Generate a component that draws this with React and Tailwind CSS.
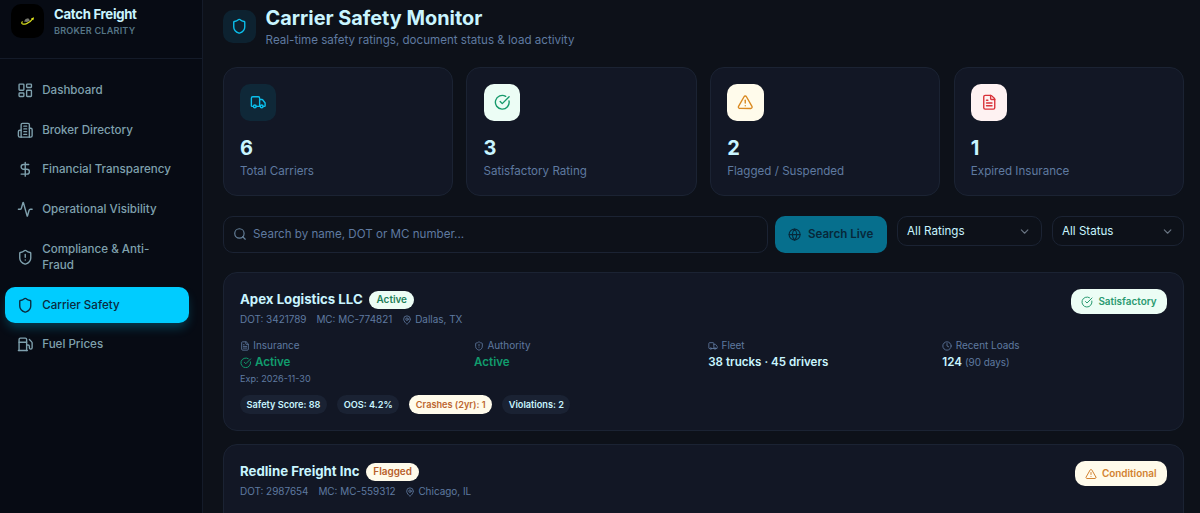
import { useState } from 'react';
import {
  LayoutDashboard, DollarSign, Activity, ShieldAlert, Shield, Fuel, Truck,
  CircleCheckBig, TriangleAlert, FileText, Search, Globe, ChevronDown, MapPin, Clock
} from 'lucide-react';

const BuildingIcon = ({ className }) => (
  <svg className={className} viewBox="0 0 24 24" fill="none" stroke="currentColor" strokeWidth={2} strokeLinecap="round" strokeLinejoin="round">
    <path d="M6 22V4a2 2 0 0 1 2-2h8a2 2 0 0 1 2 2v18Z" />
    <path d="M6 12H4a2 2 0 0 0-2 2v6a2 2 0 0 0 2 2h2" />
    <path d="M18 9h2a2 2 0 0 1 2 2v9a2 2 0 0 1-2 2h-2" />
    <path d="M10 6h4M10 10h4M10 14h4M10 18h4" />
  </svg>
);

const navItems = [
  { label: 'Dashboard', icon: LayoutDashboard },
  { label: 'Broker Directory', icon: BuildingIcon },
  { label: 'Financial Transparency', icon: DollarSign },
  { label: 'Operational Visibility', icon: Activity },
  { label: 'Compliance & Anti-Fraud', icon: ShieldAlert },
  { label: 'Carrier Safety', icon: Shield },
  { label: 'Fuel Prices', icon: Fuel }
];

const stats = [
  { label: 'Total Carriers', value: 6, icon: Truck, color: 'bg-[#0f2838] text-[#0bbfec]' },
  { label: 'Satisfactory Rating', value: 3, icon: CircleCheckBig, color: 'bg-[#ecfdf5] text-[#169a6b]' },
  { label: 'Flagged / Suspended', value: 2, icon: TriangleAlert, color: 'bg-[#fffbeb] text-[#d9881f]' },
  { label: 'Expired Insurance', value: 1, icon: FileText, color: 'bg-[#fef2f2] text-[#d93038]' }
];

const carriers = [
  {
    name: 'Apex Logistics LLC',
    status: 'Active',
    statusColor: 'bg-[#ecfdf5] text-[#1f8059]',
    dot: '3421789',
    mc: 'MC-774821',
    city: 'Dallas, TX',
    rating: 'Satisfactory',
    ratingIcon: CircleCheckBig,
    ratingColor: 'bg-[#ecfdf5] text-[#2a9a70]',
    exp: '2026-11-30',
    trucks: 38,
    drivers: 45,
    loads: 124,
    score: 88,
    oos: '4.2%',
    crashes: 1,
    violations: 2
  },
  {
    name: 'Redline Freight Inc',
    status: 'Flagged',
    statusColor: 'bg-[#fffbeb] text-[#b8602a]',
    dot: '2987654',
    mc: 'MC-559312',
    city: 'Chicago, IL',
    rating: 'Conditional',
    ratingIcon: TriangleAlert,
    ratingColor: 'bg-[#fffbeb] text-[#d28230]',
    exp: '2026-03-15',
    trucks: 22,
    drivers: 27,
    loads: 61,
    score: 64,
    oos: '11.8%',
    crashes: 3,
    violations: 7
  }
];

const Sidebar = ({ active, onSelect }) => (
  <aside className="w-[203px] shrink-0 bg-[#070b14] border-r border-[#141b29]">
    <div className="h-[59px] border-b border-[#141b29] flex items-start gap-[10px] pl-[11px] pt-[4px]">
      <div className="w-[33px] h-[34px] rounded-[10px] bg-black flex items-center justify-center">
        <svg className="w-[15px] h-[10px]" viewBox="0 0 15 10" fill="none">
          <path d="M4 5.4 5.6 3 8.2 2.2 10 4.6 7 6Z" fill="#77786f" />
          <path d="M2.2 5.8C.6 8 3.4 8.8 6.6 7.6 9.4 6.5 11.4 4.8 12.8 2.6" stroke="#d5dc1c" strokeWidth="1.2" strokeLinecap="round" />
          <path d="M11 2.4 14 1.3 13.3 4.2Z" fill="#e3e51e" />
        </svg>
      </div>
      <div>
        <div className="pt-[0.3px] text-[13.2px] leading-[20px] font-bold tracking-[-0.3px] text-[#c9f5ff]">Catch Freight</div>
        <div className="text-[9.1px] leading-[13px] font-semibold tracking-[0.2px] text-[#557586]">BROKER CLARITY</div>
      </div>
    </div>
    <nav className="pt-[13px] pl-[5px] pr-[13px] flex flex-col gap-[3.3px]">
      {navItems.map(({ label, icon: Icon }) => (
        <button
          key={label}
          onClick={() => onSelect(label)}
          className={`flex items-center gap-[8.5px] pl-[12.2px] pr-[12px] pt-[10.1px] pb-[9.7px] rounded-[10px] text-left text-[11.6px] leading-[16.55px] font-medium ${
            active === label
              ? 'bg-[#00ccff] text-[#0b2a3e] shadow-[0_6px_11px_-2px_rgba(0,204,255,0.28)]'
              : 'text-[#7fa1ae]'
          }`}
        >
          <Icon className="w-[16.5px] h-[16.5px] shrink-0" />
          <span>{label}</span>
        </button>
      ))}
    </nav>
  </aside>
);

const StatCard = ({ label, value, icon: Icon, color }) => (
  <div className="h-[129px] rounded-[14px] border border-[#1b2333] bg-[#121725] p-[16.3px]">
    <div className={`w-[36.5px] h-[36.5px] rounded-[10px] flex items-center justify-center ${color}`}>
      <Icon className="w-[16.5px] h-[16.5px]" />
    </div>
    <div className="mt-[14.5px] text-[20px] leading-[26.5px] font-bold text-[#c9f5ff]">{value}</div>
    <div className="mt-[1.4px] text-[11.6px] leading-[16.5px] text-[#5f7aa0]">{label}</div>
  </div>
);

const FieldLabel = ({ icon: Icon, children }) => (
  <div className="flex items-center gap-[3.3px] text-[9.93px] leading-[13.2px] text-[#5f7aa0]">
    <Icon className="w-[10px] h-[10px]" />
    {children}
  </div>
);

const chip = 'h-[19px] flex items-center rounded-full px-[6.6px] text-[9.18px] font-semibold';

const CarrierCard = ({ carrier }) => {
  const RatingIcon = carrier.ratingIcon;

  return (
    <div className="h-[159px] shrink-0 rounded-[14px] border border-[#1b2333] bg-[#121725] px-[16.4px] pt-[16px]">
      <div className="flex justify-between items-start">
        <div className="pt-[0.5px]">
          <div className="flex items-center gap-[6.6px] h-[20px]">
            <h3 className="text-[13.24px] font-bold text-[#c9f5ff]">{carrier.name}</h3>
            <span className={`h-[18px] flex items-center rounded-full px-[7.2px] text-[9.93px] font-semibold ${carrier.statusColor}`}>
              {carrier.status}
            </span>
          </div>
          <div className="mt-[3.5px] flex items-center gap-[9.9px] text-[9.93px] leading-[13.2px] text-[#5f7aa0]">
            <span>DOT: {carrier.dot}</span>
            <span>MC: {carrier.mc}</span>
            <span className="flex items-center gap-[3px]">
              <MapPin className="w-[10px] h-[10px]" />
              {carrier.city}
            </span>
          </div>
        </div>
        <div className={`h-[25px] flex items-center gap-[5px] rounded-[10px] px-[10px] text-[9.93px] font-semibold ${carrier.ratingColor}`}>
          <RatingIcon className="w-[12px] h-[12px]" />
          {carrier.rating}
        </div>
      </div>

      <div className="mt-[13px] h-[46px] grid grid-cols-4 gap-[9.9px]">
        <div>
          <FieldLabel icon={FileText}>Insurance</FieldLabel>
          <div className="mt-[2px] flex items-center gap-[3.3px] text-[11.6px] leading-[16.5px] font-semibold text-[#119c6d]">
            <CircleCheckBig className="w-[11.6px] h-[11.6px]" />
            Active
          </div>
          <div className="mt-[1px] text-[9.1px] leading-[13.2px] text-[#5f7aa0]">Exp: {carrier.exp}</div>
        </div>
        <div>
          <FieldLabel icon={ShieldAlert}>Authority</FieldLabel>
          <div className="mt-[2px] text-[11.6px] leading-[16.5px] font-semibold text-[#119c6d]">Active</div>
        </div>
        <div>
          <FieldLabel icon={Truck}>Fleet</FieldLabel>
          <div className="mt-[2px] text-[11.6px] leading-[16.5px] font-semibold text-[#c9f5ff]">
            {carrier.trucks} trucks · {carrier.drivers} drivers
          </div>
        </div>
        <div>
          <FieldLabel icon={Clock}>Recent Loads</FieldLabel>
          <div className="mt-[2px] text-[11.6px] leading-[16.5px] font-semibold text-[#c9f5ff]">
            {carrier.loads} <span className="text-[9.93px] font-normal text-[#5f7aa0]">(90 days)</span>
          </div>
        </div>
      </div>

      <div className="mt-[10px] flex gap-[10px]">
        <span className={`${chip} bg-[#1a2233] text-[#c9f5ff]`}>Safety Score: {carrier.score}</span>
        <span className={`${chip} bg-[#1a2233] text-[#c9f5ff]`}>OOS: {carrier.oos}</span>
        <span className={`${chip} bg-[#fffbeb] text-[#bd662f]`}>Crashes (2yr): {carrier.crashes}</span>
        <span className={`${chip} bg-[#1a2233] text-[#c9f5ff]`}>Violations: {carrier.violations}</span>
      </div>
    </div>
  );
};

const App = () => {
  const [active, setActive] = useState('Carrier Safety');
  const [search, setSearch] = useState('');

  return (
    <div className="flex h-screen bg-[#0d1119] font-['Inter',sans-serif]">
      <Sidebar active={active} onSelect={setActive} />

      <main className="flex-1 min-w-0 flex flex-col pl-[19.6px] pr-[16px] overflow-y-auto [scrollbar-width:none]">
        <div className="flex items-start gap-[10px] pt-[5px] h-[67px] shrink-0">
          <div className="mt-[4.5px] w-[33px] h-[33px] rounded-[10px] bg-[#0d2230] text-[#0bbfec] flex items-center justify-center">
            <Shield className="w-[16.5px] h-[16.5px]" />
          </div>
          <div>
            <h1 className="text-[19.86px] leading-[26.5px] font-bold text-[#c9f5ff]">Carrier Safety Monitor</h1>
            <p className="text-[11.6px] leading-[16.5px] text-[#5f7aa0]">Real-time safety ratings, document status &amp; load activity</p>
          </div>
        </div>

        <div className="grid grid-cols-4 gap-[13.2px] shrink-0">
          {stats.map(stat => <StatCard key={stat.label} {...stat} />)}
        </div>

        <div className="mt-[20px] h-[36.5px] flex items-start shrink-0">
          <label className="flex-1 h-[36.5px] flex items-center gap-[6.5px] pl-[9px] rounded-[10px] border border-[#1b2333]">
            <Search className="w-[14px] h-[14px] text-[#66819a]" />
            <input
              value={search}
              onChange={(e) => setSearch(e.target.value)}
              placeholder="Search by name, DOT or MC number..."
              className="flex-1 pt-[1.2px] bg-transparent outline-none text-[11.6px] text-[#c9f5ff] placeholder:text-[#5f7aa0]"
            />
          </label>
          <button className="ml-[6.5px] w-[112px] h-[36.5px] flex items-center justify-center gap-[6.6px] pt-[1.2px] rounded-[10px] bg-[#066f8d] text-[#07283a] text-[11.6px] font-semibold">
            <Globe className="w-[13.2px] h-[13.2px]" />
            Search Live
          </button>
          <button className="ml-[9.9px] w-[145px] h-[30px] flex items-center justify-between pl-[9.5px] pr-[9px] pt-[0.8px] rounded-[10px] border border-[#1b2333] text-[11.6px] text-[#c9f5ff]">
            All Ratings
            <ChevronDown className="w-[13.2px] h-[13.2px] text-[#697482]" />
          </button>
          <button className="ml-[9.9px] w-[132.5px] h-[30px] flex items-center justify-between pl-[9.5px] pr-[9px] pt-[0.8px] rounded-[10px] border border-[#1b2333] text-[11.6px] text-[#c9f5ff]">
            All Status
            <ChevronDown className="w-[13.2px] h-[13.2px] text-[#697482]" />
          </button>
        </div>

        <div className="mt-[19.5px] flex flex-col gap-[13px]">
          {carriers.map(carrier => <CarrierCard key={carrier.dot} carrier={carrier} />)}
        </div>
      </main>
    </div>
  );
};

export default App;
